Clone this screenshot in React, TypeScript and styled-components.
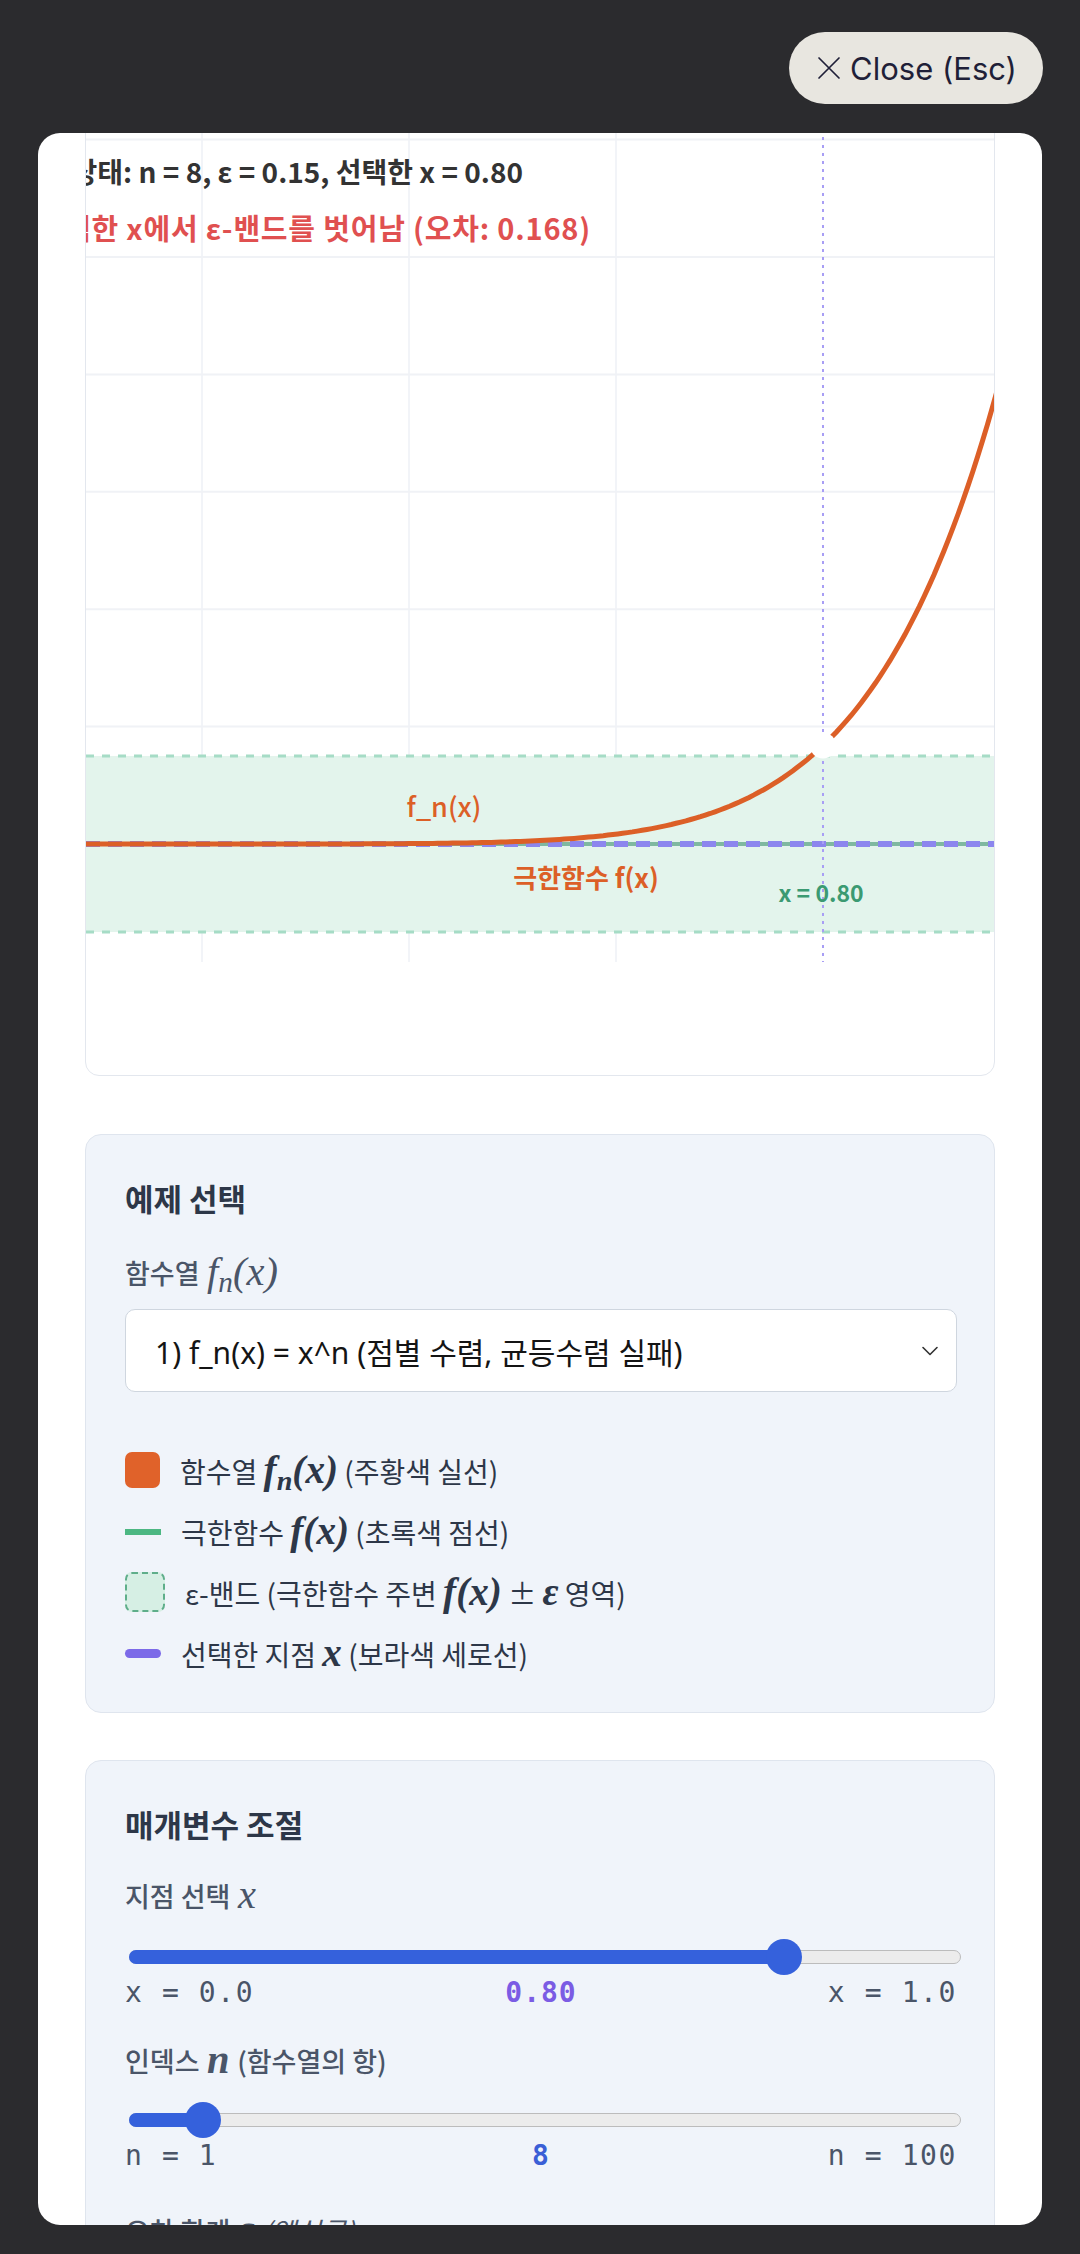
import React, { useLayoutEffect, useRef } from "react";
import styled, { createGlobalStyle } from "styled-components";
import { ChevronDown } from "lucide-react";

const GlobalStyle = createGlobalStyle`
  html, body { margin: 0; padding: 0; background: #2b2b2e; }
  body { font-family: "Noto Sans", "Noto Sans CJK KR", sans-serif; }
  * { box-sizing: border-box; }
`;

const Overlay = styled.div`
  height: 2254px;
  overflow: hidden;
  background: #2b2b2e;
  padding: 32px 38px 0;
  display: flex;
  flex-direction: column;
  gap: 29px;
`;

const TopBar = styled.div`
  display: flex;
  justify-content: flex-end;
`;

const CloseButton = styled.button`
  height: 72px;
  width: 254px;
  margin-right: -1px;
  border: none;
  border-radius: 36px;
  background: #e8e6e0;
  color: #1f1f38;
  font-family: Inter, "Noto Sans", sans-serif;
  font-size: 31px;
  display: flex;
  align-items: center;
  justify-content: center;
  gap: 9px;
  padding: 0 0 0 2px;
`;

const Card = styled.div`
  height: 2092px;
  background: #fff;
  border-radius: 22px;
  overflow: hidden;
`;

const Content = styled.div`
  padding: 40px 47px;
  display: flex;
  flex-direction: column;
`;

const ChartBox = styled.div`
  height: 1100px;
  border: 1px solid #e3e7ee;
  border-radius: 14px;
  overflow: hidden;
  margin-bottom: 58px;
  background: #fff;
`;

const Panel = styled.section`
  background: #f0f4fa;
  border: 1px solid #dfe5ee;
  border-radius: 16px;
  padding: 39px 37px 39px 39px;
  display: flex;
  flex-direction: column;
  & + & {
    margin-top: 47px;
  }
`;

const PanelTitle = styled.h3`
  margin: 0;
  font-family: "Noto Sans CJK KR", "Noto Sans", sans-serif;
  font-size: 31px;
  line-height: 48px;
  font-weight: 700;
  color: #2d3748;
`;

const FieldLabel = styled.div<{ $top: number }>`
  margin-top: ${(p) => p.$top}px;
  height: 40px;
  display: flex;
  align-items: center;
  gap: 0.28em;
  font-family: "Noto Sans CJK KR", "Noto Sans", sans-serif;
  font-size: 27px;
  font-weight: 500;
  color: #4a5568;
  white-space: nowrap;
`;

const M = styled.span<{ $bold?: boolean; $size?: number }>`
  font-family: "Liberation Serif", "DejaVu Serif", serif;
  font-style: italic;
  font-size: ${(p) => p.$size ?? 1.4}em;
  line-height: 1;
  font-weight: ${(p) => (p.$bold ? 700 : 400)};
  sub {
    font-size: 0.72em;
    vertical-align: -0.25em;
    line-height: 0;
  }
`;

const Slanted = styled.span`
  font-style: italic;
  font-weight: 400;
`;

const Select = styled.div`
  margin-top: 17px;
  height: 83px;
  background: #fff;
  border: 1.5px solid #cfd6df;
  border-radius: 10px;
  display: flex;
  align-items: center;
  justify-content: space-between;
  padding: 0 12px 0 29px;
  font-family: "Noto Sans", "Noto Sans CJK KR", sans-serif;
  font-size: 30px;
  color: #141414;
`;

const Legend = styled.ul`
  list-style: none;
  margin: 58px 0 0;
  padding: 0;
  display: flex;
  flex-direction: column;
  gap: 21px;
`;

const LegendItem = styled.li`
  height: 40px;
  display: flex;
  align-items: center;
  gap: 20px;
  font-family: "Noto Sans CJK KR", "Noto Sans", sans-serif;
  font-size: 28px;
  color: #2d3748;
  white-space: nowrap;
`;

const Swatch = styled.span<{ $kind: "box" | "line" | "band" | "bar" }>`
  flex: none;
  display: inline-block;
  ${(p) =>
    p.$kind === "box"
      ? "width: 35px; height: 36px; border-radius: 7px; background: #e0622a;"
      : p.$kind === "line"
      ? "width: 36px; height: 6px; background: #4cb782; margin-top: 2px;"
      : p.$kind === "band"
      ? "width: 40px; height: 40px; border-radius: 7px; background: #d6efe4; border: 2px dashed #5fae8a;"
      : "width: 36px; height: 9px; border-radius: 5px; background: #7c6ae8;"}
`;

const SliderWrap = styled.div<{ $top: number }>`
  position: relative;
  height: 36px;
  margin: ${(p) => p.$top}px -4px 0 4px;
  display: flex;
  align-items: center;
`;

const Rail = styled.div`
  width: 100%;
  height: 14px;
  border-radius: 7px;
  background: #ececec;
  border: 1.5px solid #bcbcbc;
`;

const RailFill = styled.div`
  position: absolute;
  left: 0;
  top: 11px;
  height: 14px;
  border-radius: 7px;
  background: #3561dc;
`;

const Thumb = styled.div`
  position: absolute;
  top: 0;
  width: 36px;
  height: 36px;
  border-radius: 50%;
  background: #3561dc;
`;

const Ticks = styled.div`
  display: grid;
  grid-template-columns: 1fr auto 1fr;
  align-items: center;
  height: 34px;
  font-family: "DejaVu Sans Mono", "Liberation Mono", monospace;
  font-size: 28px;
  letter-spacing: 1.6px;
  color: #4a5568;
  & > :last-child {
    text-align: right;
  }
`;

const TickValue = styled.span<{ $color: string }>`
  font-weight: 700;
  color: ${(p) => p.$color};
  letter-spacing: 1px;
`;

const Slider = ({ fraction, top }: { fraction: number; top: number }) => (
  <SliderWrap $top={top}>
    <Rail />
    <RailFill style={{ width: `calc(18px + (100% - 36px) * ${fraction})` }} />
    <Thumb style={{ left: `calc((100% - 36px) * ${fraction})` }} />
  </SliderWrap>
);

const CloseIcon = () => (
  <svg width="24" height="24" viewBox="0 0 24 24" fill="none" stroke="currentColor" strokeWidth="1.7" strokeLinecap="round">
    <path d="M2 2 L22 22 M22 2 L2 22" />
  </svg>
);

// chart drawn in page coordinates (viewBox matches the box's place on screen)
const X0 = -5;
const XW = 1035;
const Y0 = 844;
const YH = 587;
const px = (x: number) => X0 + XW * x;
const py = (v: number) => Y0 - YH * v;

const curve = (() => {
  const pts: string[] = [];
  for (let i = 0; i <= 200; i++) {
    const x = 0.08 + (0.94 * i) / 200;
    pts.push(`${px(x).toFixed(1)},${py(Math.pow(x, 8)).toFixed(1)}`);
  }
  return "M" + pts.join(" L");
})();

const Chart = () => {
  const gridX = [0.2, 0.4, 0.6];
  const gridY = [0.2, 0.4, 0.6, 0.8, 1.0, 1.2];
  const eps = 0.15;
  const font = '"Noto Sans CJK KR", "Noto Sans", sans-serif';
  return (
    <svg width="908" height="1098" viewBox="86 -23 908 1098" style={{ display: "block" }}>
      {gridX.map((g) => (
        <line key={g} x1={px(g)} x2={px(g)} y1={-23} y2={962} stroke="#eef1f6" strokeWidth="1.5" />
      ))}
      {gridY.map((g) => (
        <line key={g} x1={86} x2={994} y1={py(g)} y2={py(g)} stroke="#f0f2f6" strokeWidth="2" />
      ))}
      <rect x={86} y={py(eps)} width={908} height={py(-eps) - py(eps)} fill="#e3f4ec" />
      <line x1={86} x2={994} y1={py(eps)} y2={py(eps)} stroke="#a6dcc6" strokeWidth="3" strokeDasharray="8 8" />
      <line x1={86} x2={994} y1={py(-eps)} y2={py(-eps)} stroke="#a6dcc6" strokeWidth="3" strokeDasharray="8 8" />
      <line x1={86} x2={994} y1={py(0)} y2={py(0)} stroke="#7fb8a0" strokeWidth="4" />
      <line x1={86} x2={994} y1={py(0)} y2={py(0)} stroke="#8c86ee" strokeWidth="6" strokeDasharray="14 8" />
      <path d={curve} fill="none" stroke="#dc5f27" strokeWidth="5" strokeLinecap="round" />
      <line x1={px(0.8)} x2={px(0.8)} y1={-23} y2={962} stroke="#a89ef5" strokeWidth="2" strokeDasharray="3 5" />
      <circle cx={px(0.8)} cy={py(Math.pow(0.8, 8))} r={13} fill="#fff" />
      <text x={523} y={183} textAnchor="end" fontFamily={font} fontSize="28" fontWeight="700" fill="#333">
        현재 상태: n = 8, ε = 0.15, 선택한 x = 0.80
      </text>
      <text x={591} y={240} textAnchor="end" fontFamily={font} fontSize="29" fontWeight="700" letterSpacing="0.8" fill="#e05050">
        선택한 x에서 ε-밴드를 벗어남 (오차: 0.168)
      </text>
      <text x={444} y={817} textAnchor="middle" fontFamily={font} fontSize="27" fontWeight="500" fill="#dc5f27">
        f_n(x)
      </text>
      <text x={586} y={888} textAnchor="middle" fontFamily={font} fontSize="26" fontWeight="700" fill="#dc5f27">
        극한함수 f(x)
      </text>
      <text x={821} y={902} textAnchor="middle" fontFamily={font} fontSize="23" fontWeight="700" fill="#3b9a72">
        x = 0.80
      </text>
    </svg>
  );
};

export default function App() {
  const cardRef = useRef<HTMLDivElement>(null);
  useLayoutEffect(() => {
    if (cardRef.current) cardRef.current.scrollTop = 197;
  }, []);

  return (
    <>
      <GlobalStyle />
      <Overlay>
        <TopBar>
          <CloseButton>
            <CloseIcon />
            Close (Esc)
          </CloseButton>
        </TopBar>
        <Card ref={cardRef}>
          <Content>
            <ChartBox>
              <Chart />
            </ChartBox>

            <Panel>
              <PanelTitle>예제 선택</PanelTitle>
              <FieldLabel $top={30}>
                함수열
                <M $size={1.5}>
                  f<sub>n</sub>(x)
                </M>
              </FieldLabel>
              <Select>
                <span>1) f_n(x) = x^n (점별 수렴, 균등수렴 실패)</span>
                <ChevronDown size={28} strokeWidth={1.4} color="#333" />
              </Select>
              <Legend>
                <LegendItem>
                  <Swatch $kind="box" />
                  <span>
                    함수열 <M $bold>f<sub>n</sub>(x)</M> (주황색 실선)
                  </span>
                </LegendItem>
                <LegendItem>
                  <Swatch $kind="line" />
                  <span>
                    극한함수 <M $bold>f(x)</M> (초록색 점선)
                  </span>
                </LegendItem>
                <LegendItem>
                  <Swatch $kind="band" />
                  <span>
                    ε-밴드 (극한함수 주변 <M $bold>f(x)</M> ± <M $bold>ε</M> 영역)
                  </span>
                </LegendItem>
                <LegendItem>
                  <Swatch $kind="bar" />
                  <span>
                    선택한 지점 <M $bold>x</M> (보라색 세로선)
                  </span>
                </LegendItem>
              </Legend>
            </Panel>

            <Panel>
              <PanelTitle>매개변수 조절</PanelTitle>
              <FieldLabel $top={27}>
                지점 선택
                <M $size={1.5}>x</M>
              </FieldLabel>
              <Slider fraction={0.8} top={24} />
              <Ticks>
                <span>x = 0.0</span>
                <TickValue $color="#7b5ce4">0.80</TickValue>
                <span>x = 1.0</span>
              </Ticks>
              <FieldLabel $top={31}>
                인덱스
                <M $bold $size={1.5}>
                  n
                </M>
                (함수열의 항)
              </FieldLabel>
              <Slider fraction={7 / 99} top={22} />
              <Ticks>
                <span>n = 1</span>
                <TickValue $color="#3a5fd6">8</TickValue>
                <span>n = 100</span>
              </Ticks>
              <FieldLabel $top={38}>
                오차 한계
                <M $bold $size={1.5}>
                  ε
                </M>
                <Slanted>(엡실론)</Slanted>
              </FieldLabel>
              <Slider fraction={0.15} top={22} />
            </Panel>
          </Content>
        </Card>
      </Overlay>
    </>
  );
}
